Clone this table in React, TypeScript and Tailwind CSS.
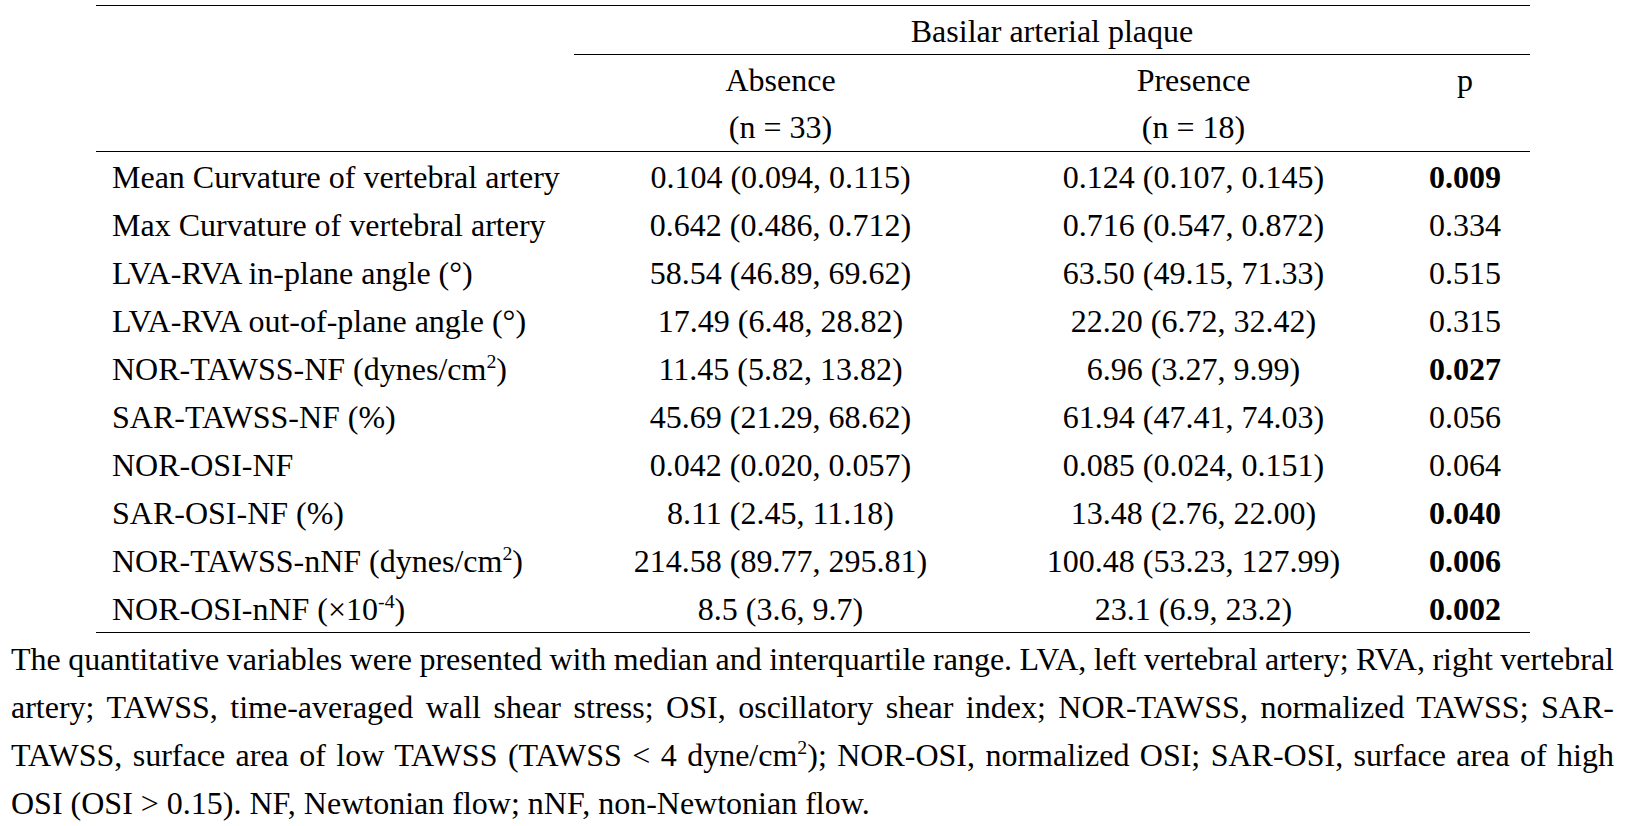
import type { ReactNode } from 'react'

type Row = { label: ReactNode; absent: string; present: string; p: string; sig?: boolean }

const Sup = ({ children }: { children: ReactNode }) => (
  <sup className="text-[0.62em] -top-[0.6em]">{children}</sup>
)

const rows: Row[] = [
  { label: 'Mean Curvature of vertebral artery', absent: '0.104 (0.094, 0.115)', present: '0.124 (0.107, 0.145)', p: '0.009', sig: true },
  { label: 'Max Curvature of vertebral artery', absent: '0.642 (0.486, 0.712)', present: '0.716 (0.547, 0.872)', p: '0.334' },
  { label: 'LVA-RVA in-plane angle (°)', absent: '58.54 (46.89, 69.62)', present: '63.50 (49.15, 71.33)', p: '0.515' },
  { label: 'LVA-RVA out-of-plane angle (°)', absent: '17.49 (6.48, 28.82)', present: '22.20 (6.72, 32.42)', p: '0.315' },
  { label: <>NOR-TAWSS-NF (dynes/cm<Sup>2</Sup>)</>, absent: '11.45 (5.82, 13.82)', present: '6.96 (3.27, 9.99)', p: '0.027', sig: true },
  { label: 'SAR-TAWSS-NF (%)', absent: '45.69 (21.29, 68.62)', present: '61.94 (47.41, 74.03)', p: '0.056' },
  { label: 'NOR-OSI-NF', absent: '0.042 (0.020, 0.057)', present: '0.085 (0.024, 0.151)', p: '0.064' },
  { label: 'SAR-OSI-NF (%)', absent: '8.11 (2.45, 11.18)', present: '13.48 (2.76, 22.00)', p: '0.040', sig: true },
  { label: <>NOR-TAWSS-nNF (dynes/cm<Sup>2</Sup>)</>, absent: '214.58 (89.77, 295.81)', present: '100.48 (53.23, 127.99)', p: '0.006', sig: true },
  { label: <>NOR-OSI-nNF (×10<Sup>-4</Sup>)</>, absent: '8.5 (3.6, 9.7)', present: '23.1 (6.9, 23.2)', p: '0.002', sig: true },
]

export default function App() {
  return (
    <div className="w-[1627px] h-[826px] bg-white text-black font-['Liberation_Serif',serif] text-[32px] leading-[48px] pt-[5px] overflow-hidden">
      <table className="ml-[96px] w-[1434px] table-fixed border-collapse">
        <colgroup>
          <col className="w-[478px]" />
          <col className="w-[413px]" />
          <col className="w-[413px]" />
          <col className="w-[130px]" />
        </colgroup>
        <thead>
          <tr className="border-t border-black">
            <th className="p-0" />
            <th colSpan={3} className="p-0 pt-[3px] leading-[45px] font-normal text-center border-b border-black">
              Basilar arterial plaque
            </th>
          </tr>
          <tr className="border-b border-black">
            <th className="p-0" />
            <th className="p-0 pt-[2px] font-normal text-center leading-[47px]">
              <div>Absence</div>
              <div>(n = 33)</div>
            </th>
            <th className="p-0 pt-[2px] font-normal text-center leading-[47px]">
              <div>Presence</div>
              <div>(n = 18)</div>
            </th>
            <th className="p-0 pt-[2px] font-normal text-center align-top leading-[47px]">p</th>
          </tr>
        </thead>
        <tbody className="border-b border-black">
          {rows.map((r, i) => (
            <tr key={i} className="h-[48px] leading-[46px]">
              <td className="p-0 pt-[2px] pl-[16px] whitespace-nowrap">{r.label}</td>
              <td className="p-0 pt-[2px] text-center whitespace-nowrap">{r.absent}</td>
              <td className="p-0 pt-[2px] text-center whitespace-nowrap">{r.present}</td>
              <td className={r.sig ? 'p-0 pt-[2px] text-center font-bold' : 'p-0 pt-[2px] text-center'}>{r.p}</td>
            </tr>
          ))}
        </tbody>
      </table>

      {/* Footnote */}
      <div className="ml-[11px] w-[1603px] pt-[2px] leading-[48px]">
        <div className="whitespace-nowrap text-justify [text-align-last:justify] [word-spacing:-2px]">
          The quantitative variables were presented with median and interquartile range. LVA, left vertebral artery; RVA, right vertebral
        </div>
        <div className="whitespace-nowrap text-justify [text-align-last:justify]">
          artery; TAWSS, time-averaged wall shear stress; OSI, oscillatory shear index; NOR-TAWSS, normalized TAWSS; SAR-
        </div>
        <div className="whitespace-nowrap text-justify [text-align-last:justify]">
          TAWSS, surface area of low TAWSS (TAWSS &lt; 4 dyne/cm<Sup>2</Sup>); NOR-OSI, normalized OSI; SAR-OSI, surface area of high
        </div>
        <div className="whitespace-nowrap">
          OSI (OSI &gt; 0.15). NF, Newtonian flow; nNF, non-Newtonian flow.
        </div>
      </div>
    </div>
  )
}
